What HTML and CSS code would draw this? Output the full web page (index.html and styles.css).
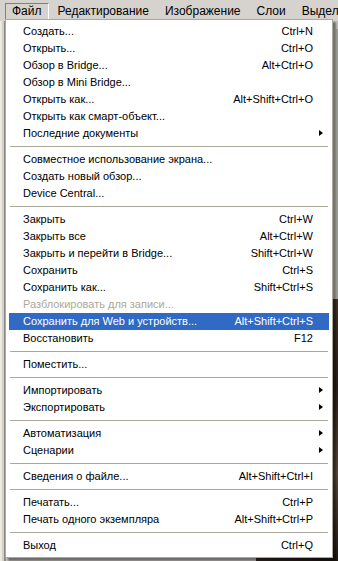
FILE: index.html
```html
<!DOCTYPE html>
<html lang="ru">

<head>
    <meta charset="UTF-8" />
    <meta name="viewport" content="width=device-width, initial-scale=1.0" />
    <title>Файл</title>
    <link rel="stylesheet" href="styles.css">
</head>

<body>
    <div class="app">
        <div class="menubar">
            <div class="menubar-item pressed">Файл</div>
            <div class="menubar-item">Редактирование</div>
            <div class="menubar-item">Изображение</div>
            <div class="menubar-item">Слои</div>
            <div class="menubar-item">Выделение</div>
        </div>

        <div class="workspace">
            <div class="side-panel"></div>
            <div class="document">
                <div class="doc-top"><div class="scrollbar"></div></div>
                <div class="doc-bottom"><div class="doc-photo"></div></div>
            </div>
        </div>

        <!-- выпадающее меню "Файл" -->
        <div class="dropdown">
            <div class="item"><span>Создать...</span><span class="key">Ctrl+N</span></div>
            <div class="item"><span>Открыть...</span><span class="key">Ctrl+O</span></div>
            <div class="item"><span>Обзор в Bridge...</span><span class="key">Alt+Ctrl+O</span></div>
            <div class="item"><span>Обзор в Mini Bridge...</span></div>
            <div class="item"><span>Открыть как...</span><span class="key">Alt+Shift+Ctrl+O</span></div>
            <div class="item"><span>Открыть как смарт-объект...</span></div>
            <div class="item"><span>Последние документы</span><span class="key"></span><span class="arrow"></span></div>
            <div class="sep"></div>
            <div class="item"><span>Совместное использование экрана...</span></div>
            <div class="item"><span>Создать новый обзор...</span></div>
            <div class="item"><span>Device Central...</span></div>
            <div class="sep"></div>
            <div class="item"><span>Закрыть</span><span class="key">Ctrl+W</span></div>
            <div class="item"><span>Закрыть все</span><span class="key">Alt+Ctrl+W</span></div>
            <div class="item"><span>Закрыть и перейти в Bridge...</span><span class="key">Shift+Ctrl+W</span></div>
            <div class="item"><span>Сохранить</span><span class="key">Ctrl+S</span></div>
            <div class="item"><span>Сохранить как...</span><span class="key">Shift+Ctrl+S</span></div>
            <div class="item disabled"><span>Разблокировать для записи...</span></div>
            <div class="item active"><span>Сохранить для Web и устройств...</span><span class="key">Alt+Shift+Ctrl+S</span></div>
            <div class="item"><span>Восстановить</span><span class="key">F12</span></div>
            <div class="sep"></div>
            <div class="item"><span>Поместить...</span></div>
            <div class="sep"></div>
            <div class="item"><span>Импортировать</span><span class="key"></span><span class="arrow"></span></div>
            <div class="item"><span>Экспортировать</span><span class="key"></span><span class="arrow"></span></div>
            <div class="sep"></div>
            <div class="item"><span>Автоматизация</span><span class="key"></span><span class="arrow"></span></div>
            <div class="item"><span>Сценарии</span><span class="key"></span><span class="arrow"></span></div>
            <div class="sep"></div>
            <div class="item"><span>Сведения о файле...</span><span class="key">Alt+Shift+Ctrl+I</span></div>
            <div class="sep"></div>
            <div class="item"><span>Печатать...</span><span class="key">Ctrl+P</span></div>
            <div class="item"><span>Печать одного экземпляра</span><span class="key">Alt+Shift+Ctrl+P</span></div>
            <div class="sep"></div>
            <div class="item"><span>Выход</span><span class="key">Ctrl+Q</span></div>
        </div>
    </div>
</body>

</html>
```

FILE: styles.css
```css
* {
    margin: 0;
    padding: 0;
    box-sizing: border-box;
}

body {
    width: 338px;
    height: 561px;
    overflow: hidden;
    font-family: "Liberation Sans", Arial, sans-serif;
    font-size: 11px;
    color: #000;
    background: #d4d0c8;
}

.app {
    position: relative;
    display: flex;
    flex-direction: column;
    height: 100%;
}

/* строка меню */
.menubar {
    display: flex;
    gap: 2px;
    height: 21px;
    padding: 3px 0 0 5px;
    background: #d6d3ce;
    white-space: nowrap;
    font-size: 12px;
}

.menubar-item {
    height: 17px;
    line-height: 15px;
    padding: 0 6px 0 6px;
    border: 1px solid transparent;
}

.menubar-item.pressed {
    border-color: #808080 #fff #fff #808080;
}

/* рабочая область за меню */
.workspace {
    flex: 1;
    display: flex;
}

.side-panel {
    width: 6px;
    background: #d4d0c8;
    border-left: 2px solid #ece9e0;
    border-right: 2px solid #8c8a84;
}

.document {
    flex: 1;
    display: flex;
    flex-direction: column;
}

.doc-top {
    height: 278px;
    display: flex;
    justify-content: flex-end;
    background: #c8c5be;
}

.scrollbar {
    width: 6px;
    margin-top: 8px;
    background: linear-gradient(to right, #efeeea, #9a9891);
}

.doc-bottom {
    flex: 1;
    display: flex;
    padding-left: 250px;
    background: #c8c5be;
}

.doc-photo {
    flex: 1;
    background: linear-gradient(160deg, #4a3a30 0%, #2a201a 40%, #5a4a3e 70%, #1e1712 100%);
}

/* выпадающее меню */
.dropdown {
    position: absolute;
    top: 19px;
    left: 5px;
    width: 328px;
    padding: 3px;
    background: #fff;
    border: 1px solid #aca899;
    box-shadow: 3px 3px 2px rgba(0, 0, 0, .45);
}

.item {
    display: grid;
    grid-template-columns: 1fr auto 16px;
    height: 17px;
    line-height: 17px;
    padding-left: 14px;
    white-space: nowrap;
}

.item .key {
    text-align: right;
    padding-left: 12px;
}

.item .arrow {
    width: 0;
    height: 0;
    margin: 5px 0 0 6px;
    border-top: 3.5px solid transparent;
    border-bottom: 3.5px solid transparent;
    border-left: 4px solid #000;
}

.item.active {
    background: #316ac5;
    color: #fff;
}

.item.disabled {
    color: #aca899;
}

.sep {
    height: 9px;
    margin: 0 1px;
    padding-top: 4px;
}

.sep::before {
    content: "";
    display: block;
    border-top: 1px solid #aca899;
}
```
